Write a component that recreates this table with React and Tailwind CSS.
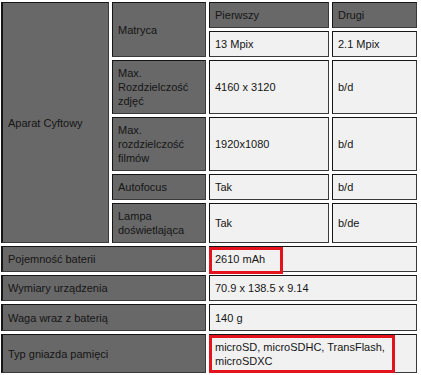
import React from "react";

const base =
  "flex items-center px-[5px] border border-[#3a3a3a] border-t-[#151515] border-l-[#151515] text-[11px] leading-[14px] text-[#151515]";
const dark = base + " bg-[#686868]";
const light = base + " bg-[#f1f1f1]";

function RedMark({ className }) {
  return (
    <div
      className={
        "absolute pointer-events-none border-[3px] border-[#e3121d] " + className
      }
    />
  );
}

export default function App() {
  return (
    <div
      className="bg-white w-[421px] h-[375px] pl-[1px] pt-[2px]"
      style={{ fontFamily: '"Liberation Sans", Arial, sans-serif' }}
    >
      <div className="grid grid-cols-[108px_94px_120px_85px] grid-rows-[26px_26px_54px_54px_26px_40px_26px_26px_27px_39px] gap-[3px]">
        <div className={dark + " row-span-6 border-l-2"}>Aparat Cyftowy</div>
        <div className={dark + " row-span-2"}>Matryca</div>
        <div className={dark}>Pierwszy</div>
        <div className={dark}>Drugi</div>
        <div className={light}>13 Mpix</div>
        <div className={light}>2.1 Mpix</div>

        <div className={dark}>Max. Rozdzielczość zdjęć</div>
        <div className={light}>4160 x 3120</div>
        <div className={light}>b/d</div>

        <div className={dark}>Max. rozdzielczość filmów</div>
        <div className={light}>1920x1080</div>
        <div className={light}>b/d</div>

        <div className={dark}>Autofocus</div>
        <div className={light}>Tak</div>
        <div className={light}>b/d</div>

        <div className={dark}>Lampa doświetlająca</div>
        <div className={light}>Tak</div>
        <div className={light}>b/de</div>

        <div className={dark + " col-span-2 border-l-2"}>Pojemność baterii</div>
        <div className={light + " col-span-2 relative"}>
          <span>2610 mAh</span>
          <RedMark className="-left-[1px] top-0 w-[74px] h-[27px]" />
        </div>

        <div className={dark + " col-span-2 border-l-2"}>Wymiary urządzenia</div>
        <div className={light + " col-span-2"}>70.9 x 138.5 x 9.14</div>

        <div className={dark + " col-span-2 border-l-2"}>Waga wraz z baterią</div>
        <div className={light + " col-span-2"}>140 g</div>

        <div className={dark + " col-span-2 border-l-2"}>Typ gniazda pamięci</div>
        <div className={light + " col-span-2 relative"}>
          <span className="w-[180px]">microSD, microSDHC, TransFlash, microSDXC</span>
          <RedMark className="-left-[1px] top-0 w-[186px] h-[38px]" />
        </div>
      </div>
    </div>
  );
}
